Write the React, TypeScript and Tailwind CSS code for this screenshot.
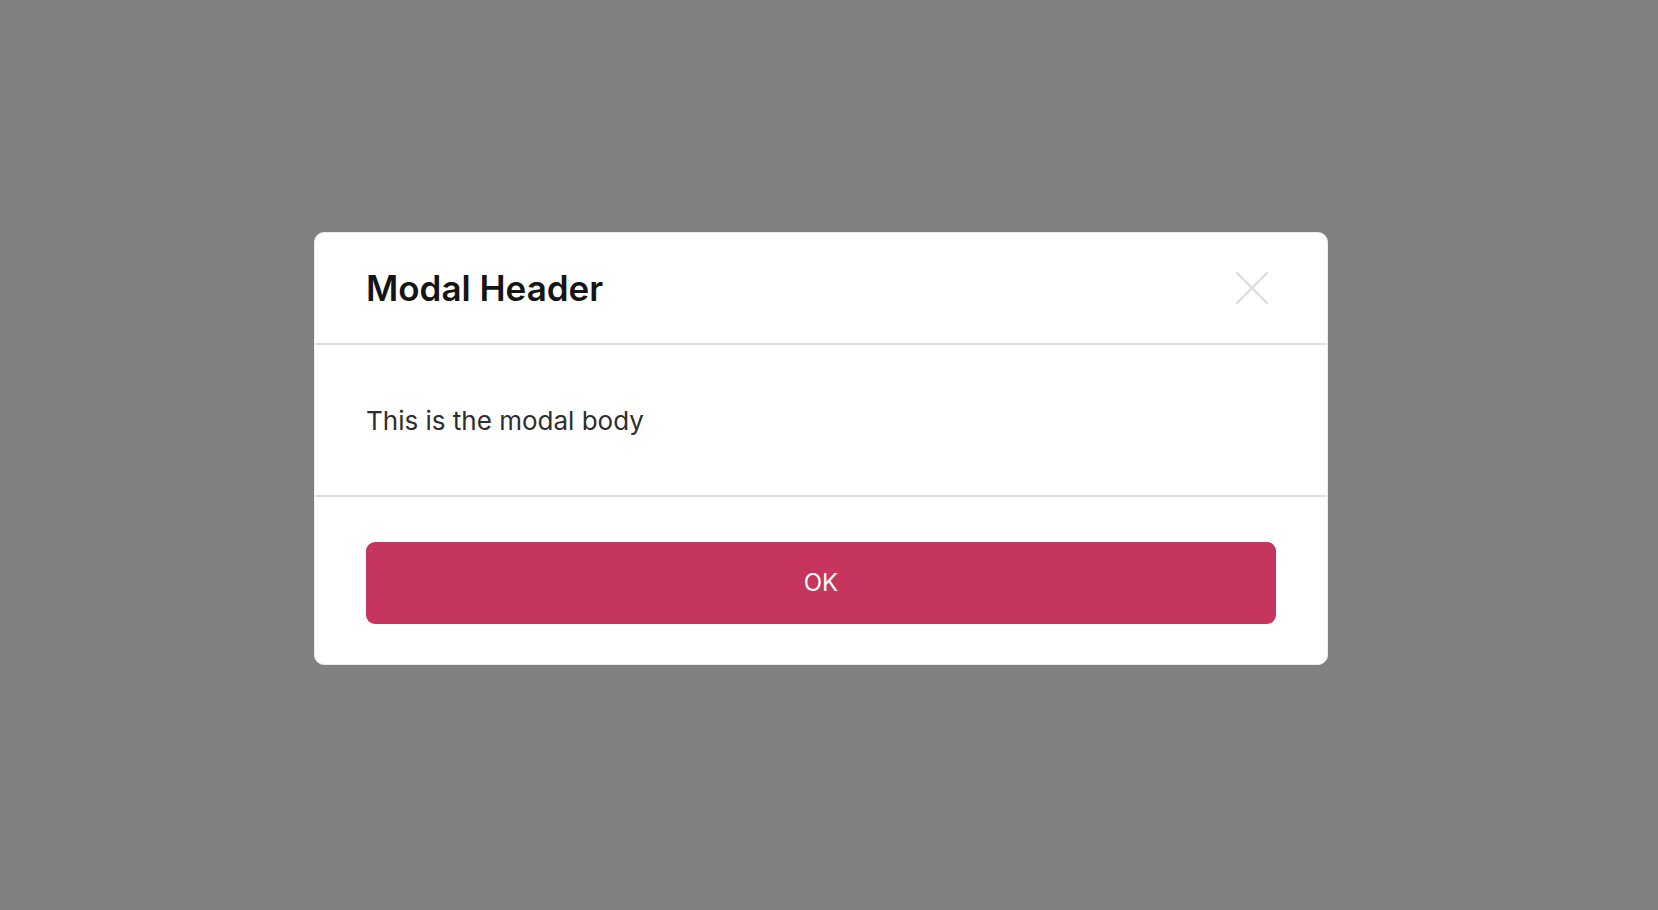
import React from 'react';

const CloseIcon: React.FC = () => (
  <svg width="32" height="32" viewBox="0 0 32 32" fill="none">
    <path d="M1 1L31 31M31 1L1 31" stroke="#dcdcdc" strokeWidth="2.4" strokeLinecap="round" />
  </svg>
);

const App: React.FC = () => {
  return (
    <div
      className="w-full h-[910px] bg-[#808080] flex items-start pt-[232px] pl-[314px]"
      style={{ fontFamily: 'Inter, "Noto Sans", sans-serif' }}
    >
      <div className="w-[1014px] bg-white rounded-[10px] border border-[#ececec] flex flex-col">
        {/* header */}
        <div className="h-[112px] px-[51px] flex items-center justify-between border-b-2 border-[#e0e0e0]">
          <h2 className="text-[35px] font-semibold text-[#151515]">Modal Header</h2>
          <button className="w-[48px] h-[48px] flex items-center justify-center">
            <CloseIcon />
          </button>
        </div>

        {/* body */}
        <div className="h-[152px] px-[51px] flex items-center border-b-2 border-[#e0e0e0]">
          <p className="text-[26px] text-[#2e2e2e]">This is the modal body</p>
        </div>

        {/* footer */}
        <div className="px-[51px] pt-[45px] pb-[40px]">
          <button className="w-full h-[82px] rounded-[9px] bg-[#c5355d] text-white text-[24px] flex items-center justify-center">
            OK
          </button>
        </div>
      </div>
    </div>
  );
};

export default App;
